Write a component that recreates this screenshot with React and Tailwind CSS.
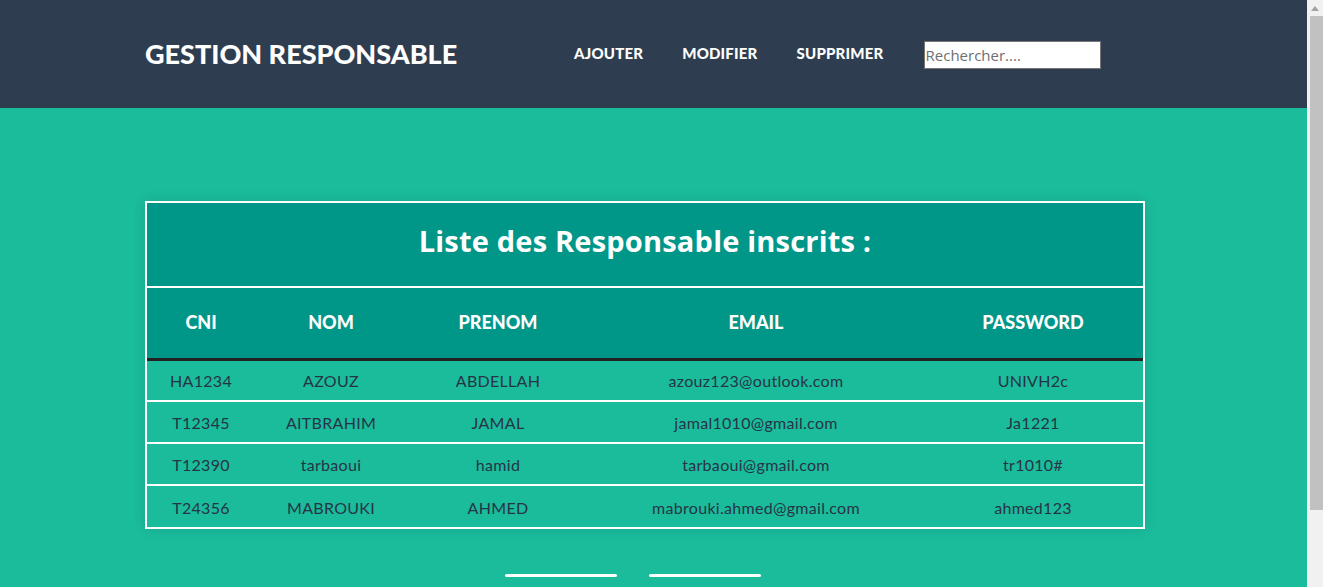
import React from 'react';

const rows = [
  { cni: 'HA1234', nom: 'AZOUZ', prenom: 'ABDELLAH', email: 'azouz123@outlook.com', password: 'UNIVH2c' },
  { cni: 'T12345', nom: 'AITBRAHIM', prenom: 'JAMAL', email: 'jamal1010@gmail.com', password: 'Ja1221' },
  { cni: 'T12390', nom: 'tarbaoui', prenom: 'hamid', email: 'tarbaoui@gmail.com', password: 'tr1010#' },
  { cni: 'T24356', nom: 'MABROUKI', prenom: 'AHMED', email: 'mabrouki.ahmed@gmail.com', password: 'ahmed123' },
];

const App = () => {
  return (
    <div className="flex h-[587px] overflow-hidden font-['Lato',sans-serif]">
      <div className="flex-1 bg-[#1abc9c]">
        <header className="flex h-[108px] items-center bg-[#2e3e50] pl-[145px]">
          <h1 className="w-[429px] text-[27px] font-black uppercase text-white">
            Gestion Responsable
          </h1>
          <nav className="flex items-center gap-[39px] pb-[1px] text-[15px] font-black uppercase tracking-[0.2px] text-white">
            <a href="#">Ajouter</a>
            <a href="#">Modifier</a>
            <a href="#">Supprimer</a>
          </nav>
          <input
            type="text"
            placeholder="Rechercher...."
            className="ml-[40px] mt-[1px] h-[28px] w-[177px] border border-[#767676] bg-white px-[1px] font-['Open_Sans',sans-serif] text-[15px] text-[#333] placeholder:text-[#6f6f6f]"
          />
        </header>

        <main className="pt-[93px]">
          <div className="ml-[145px] w-[1000px] border-2 border-white shadow-[0_0_12px_rgba(0,0,0,0.12)]">
            <div className="flex h-[83px] items-center justify-center bg-[#009688] pb-[8px] font-['Open_Sans',sans-serif] text-[29px] font-bold tracking-[0.2px] text-white">
              Liste des Responsable inscrits :
            </div>
            <table className="w-full border-collapse">
              <thead>
                <tr className="h-[72px] border-t-2 border-b-[3px] border-t-white border-b-[#222] bg-[#009688] text-[18px] font-black text-white">
                  <th className="w-[108px] font-black">CNI</th>
                  <th className="w-[152px] font-black">NOM</th>
                  <th className="w-[182px] font-black">PRENOM</th>
                  <th className="w-[334px] font-black">EMAIL</th>
                  <th className="font-black">PASSWORD</th>
                </tr>
              </thead>
              <tbody className="text-[16px] tracking-[0.3px] text-[#263445]">
                {rows.map((r, i) => (
                  <tr
                    key={r.cni}
                    className={`h-[42px] text-center ${i < rows.length - 1 ? 'border-b-2 border-white' : ''}`}
                  >
                    <td className="pt-[2px]">{r.cni}</td>
                    <td className="pt-[2px]">{r.nom}</td>
                    <td className="pt-[2px]">{r.prenom}</td>
                    <td className="pt-[2px]">{r.email}</td>
                    <td className="pt-[2px]">{r.password}</td>
                  </tr>
                ))}
              </tbody>
            </table>
          </div>

          <div className="mt-[45px] flex gap-[32px] pl-[505px]">
            <span className="h-[3px] w-[112px] rounded-full bg-white" />
            <span className="h-[3px] w-[112px] rounded-full bg-white" />
          </div>
        </main>
      </div>

      {/* scrollbar */}
      <aside className="flex w-[16px] flex-col items-center bg-[#f1f1f1] pt-[6px]">
        <svg width="8" height="5" viewBox="0 0 8 5" className="mb-[5px]">
          <polygon points="4,0 8,5 0,5" fill="#a3a3a3" />
        </svg>
        <div className="ml-[2px] h-[494px] w-[13px] bg-[#c1c1c1]" />
      </aside>
    </div>
  );
};

export default App;
